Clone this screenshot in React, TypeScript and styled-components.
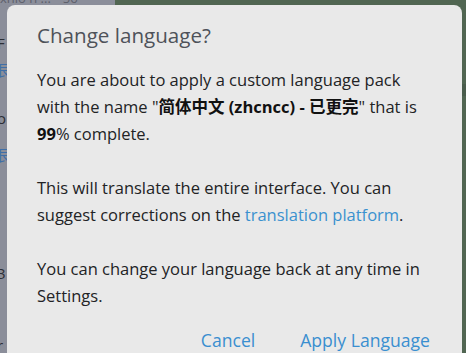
import React from "react";
import styled, { createGlobalStyle } from "styled-components";

const Global = createGlobalStyle`
  html, body { margin: 0; padding: 0; }
  body { width: 466px; height: 353px; overflow: hidden; font-family: "Open Sans", "Noto Sans CJK SC", sans-serif; }
  #root { width: 466px; height: 353px; }
`;

const Screen = styled.div`
  position: relative;
  width: 466px;
  height: 353px;
  display: flex;
  overflow: hidden;
`;

const Sidebar = styled.div`
  width: 115px;
  background: #8b8e9a;
  display: flex;
  flex-direction: column;
`;

const SideTop = styled.div`
  height: 5px;
  overflow: hidden;
  display: flex;
  align-items: flex-end;
  gap: 12px;
  font-size: 13px;
  color: #5d606b;
  line-height: 13px;
`;

const SideRow = styled.div<{ $top: number; $blue?: boolean }>`
  margin-top: ${(p) => p.$top}px;
  height: 16px;
  line-height: 16px;
  font-size: 15px;
  color: ${(p) => (p.$blue ? "#3f6fa8" : "#2d2f36")};
  margin-left: -3px;
`;

const Chat = styled.div`
  flex: 1;
  background: #516652;
  display: flex;
  flex-direction: column;
`;

const ChatBand = styled.div`
  margin-top: 84px;
  height: 12px;
  background: #4a5d4c;
`;

const Dialog = styled.div`
  position: absolute;
  left: 7px;
  top: 5px;
  width: 455px;
  height: 370px;
  background: #e9e9e9;
  border-radius: 8px;
  box-sizing: border-box;
  padding: 17px 30px 0 30px;
  display: flex;
  flex-direction: column;
`;

const Title = styled.h2`
  margin: 0;
  font-size: 20.6px;
  font-weight: 400;
  color: #4e5259;
  line-height: 26px;
`;

const Body = styled.div`
  margin-top: 18px;
  font-size: 16.5px;
  line-height: 27px;
  color: #222325;
`;

const P = styled.p`
  margin: 0 0 27px 0;
`;

const B = styled.b`
  font-weight: 700;
  color: #111;
`;

const Link = styled.span`
  color: #3a91cf;
`;

const Buttons = styled.div`
  display: flex;
  justify-content: flex-end;
  gap: 45px;
  margin-top: -8px;
  padding-right: 2px;
`;

const Btn = styled.button`
  border: 0;
  background: none;
  padding: 0;
  font-family: "Open Sans", sans-serif;
  font-size: 17.6px;
  color: #3a8fd0;
  line-height: 24px;
`;

const rows: { top: number; text: string; blue?: boolean }[] = [
  { top: 30, text: "F" },
  { top: 11, text: "艮", blue: true },
  { top: 32, text: "o" },
  { top: 21, text: "艮", blue: true },
  { top: 44, text: "l" },
  { top: 42, text: "3" },
  { top: 56, text: "r" },
];

export default function App() {
  return (
    <>
      <Global />
      <Screen>
        <Sidebar>
          <SideTop>
            <span>xhio n ...</span>
            <span>56</span>
          </SideTop>
          {rows.map((r, i) => (
            <SideRow key={i} $top={r.top} $blue={r.blue}>
              {r.text}
            </SideRow>
          ))}
        </Sidebar>
        <Chat>
          <ChatBand />
        </Chat>
        <Dialog>
          <Title>Change language?</Title>
          <Body>
            <P>
              You are about to apply a custom language pack with the name "
              <B>简体中文 (zhcncc) - 已更完</B>" that is <B>99</B>% complete.
            </P>
            <P>
              This will translate the entire interface. You can suggest
              corrections on the <Link>translation platform</Link>.
            </P>
            <P>
              You can change your language back at any time in Settings.
            </P>
          </Body>
          <Buttons>
            <Btn>Cancel</Btn>
            <Btn>Apply Language</Btn>
          </Buttons>
        </Dialog>
      </Screen>
    </>
  );
}
